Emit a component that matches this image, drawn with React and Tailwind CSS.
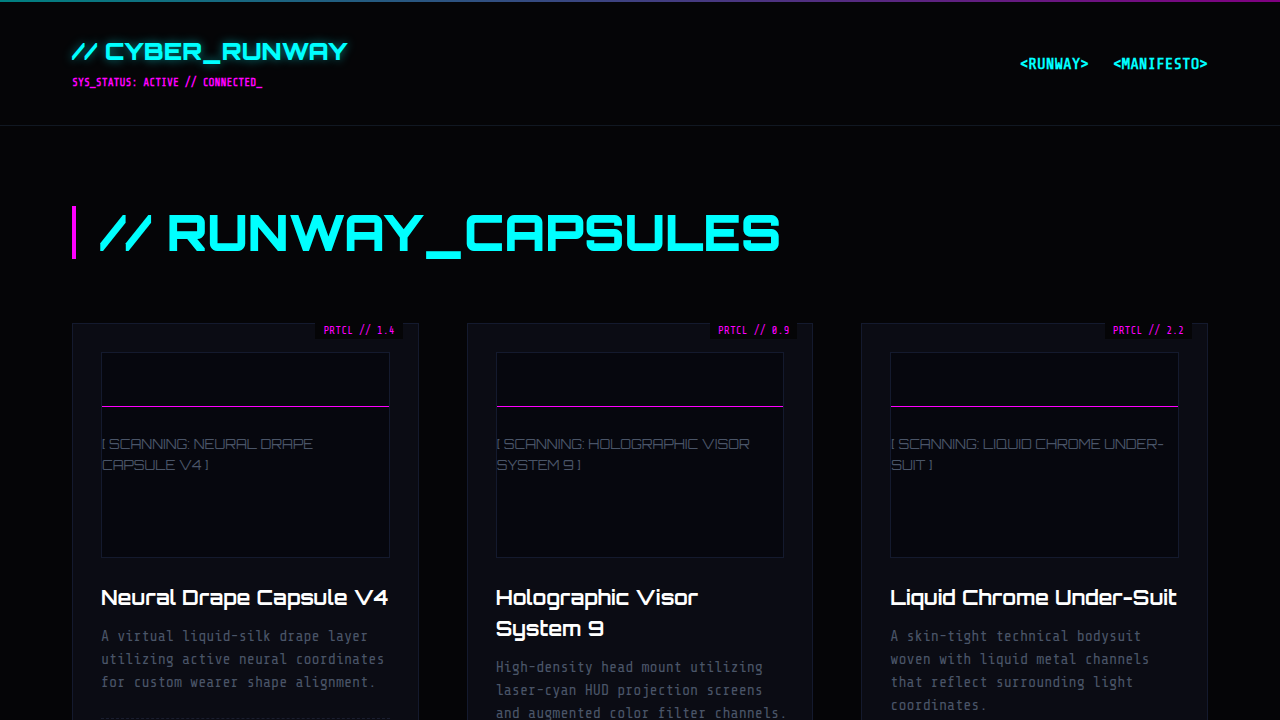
import React from 'react';

const capsules = [
  {
    id: 1,
    name: 'Neural Drape Capsule V4',
    protocol: '1.4',
    description: 'A virtual liquid-silk drape layer utilizing active neural coordinates for custom wearer shape alignment.',
  },
  {
    id: 2,
    name: 'Holographic Visor System 9',
    protocol: '0.9',
    description: 'High-density head mount utilizing laser-cyan HUD projection screens and augmented color filter channels.',
  },
  {
    id: 3,
    name: 'Liquid Chrome Under-Suit',
    protocol: '2.2',
    description: 'A skin-tight technical bodysuit woven with liquid metal channels that reflect surrounding light coordinates.',
  },
];

const Header = () => (
  <header className="border-b border-[#111822]">
    <div className="h-0.5 bg-linear-to-r/srgb from-[#008080] to-[#800080]" />
    <div className="flex items-center justify-between px-18 py-8">
      <div>
        <p className="font-['Orbitron','DejaVu_Sans',sans-serif] text-2xl leading-[35px] font-black text-[#00ffff] [text-shadow:0_0_10px_rgba(0,255,255,0.5)]">
          // CYBER_RUNWAY
        </p>
        <p className="mt-1 font-['Share_Tech_Mono','DejaVu_Sans_Mono',monospace] text-[11px] leading-5 font-bold text-[#ff00ff]">
          SYS_STATUS: ACTIVE // CONNECTED_
        </p>
      </div>
      <nav className="flex gap-6 font-['Share_Tech_Mono','DejaVu_Sans_Mono',monospace] text-base font-bold text-[#00ffff]">
        <a href="#runway" className="hover:text-[#ff00ff]">&lt;RUNWAY&gt;</a>
        <a href="#manifesto" className="hover:text-[#ff00ff]">&lt;MANIFESTO&gt;</a>
      </nav>
    </div>
  </header>
);

const CapsuleCard = ({ capsule }) => (
  <article className="relative border border-[#141a2e] bg-[#0b0c14] p-7">
    <span className="absolute -top-px right-[15px] bg-[#050507] px-2 font-['Share_Tech_Mono','DejaVu_Sans_Mono',monospace] text-[11px] leading-4 text-[#ff00ff]">
      {`PRTCL // ${capsule.protocol}`}
    </span>

    {/* Scanner preview */}
    <div className="relative flex h-[206px] items-center border border-[#141a2e] bg-[#06070e]">
      <div className="absolute inset-x-0 top-[26%] h-px bg-[#ff00ff]" />
      <p className="font-['Orbitron','DejaVu_Sans',sans-serif] text-[13px] leading-[21px] text-[#4a5568] uppercase">
        {`[ Scanning: ${capsule.name} ]`}
      </p>
    </div>

    <h2 className="mt-6 font-['Orbitron','DejaVu_Sans',sans-serif] text-xl leading-[31px] font-bold text-white">
      {capsule.name}
    </h2>
    <p className="mt-3 -mr-1 font-['Share_Tech_Mono','DejaVu_Sans_Mono',monospace] text-[15px] leading-[23px] text-[#4a5568]">
      {capsule.description}
    </p>
    <div className="mt-6 border-t border-dashed border-[#1a1e30] pt-5" />
  </article>
);

const App = () => {
  return (
    <div className="min-h-screen bg-[#050507]">
      <Header />
      <main className="px-18 py-20">
        <h1 className="mb-16 border-l-4 border-[#ff00ff] pl-6 font-['Orbitron','DejaVu_Sans',sans-serif] text-[49px] leading-[53px] font-black text-[#00ffff]">
          // RUNWAY_CAPSULES
        </h1>
        <div id="runway" className="grid grid-cols-1 gap-12 md:grid-cols-3">
          {capsules.map(capsule => <CapsuleCard key={capsule.id} capsule={capsule} />)}
        </div>
      </main>
    </div>
  );
};

export default App;
